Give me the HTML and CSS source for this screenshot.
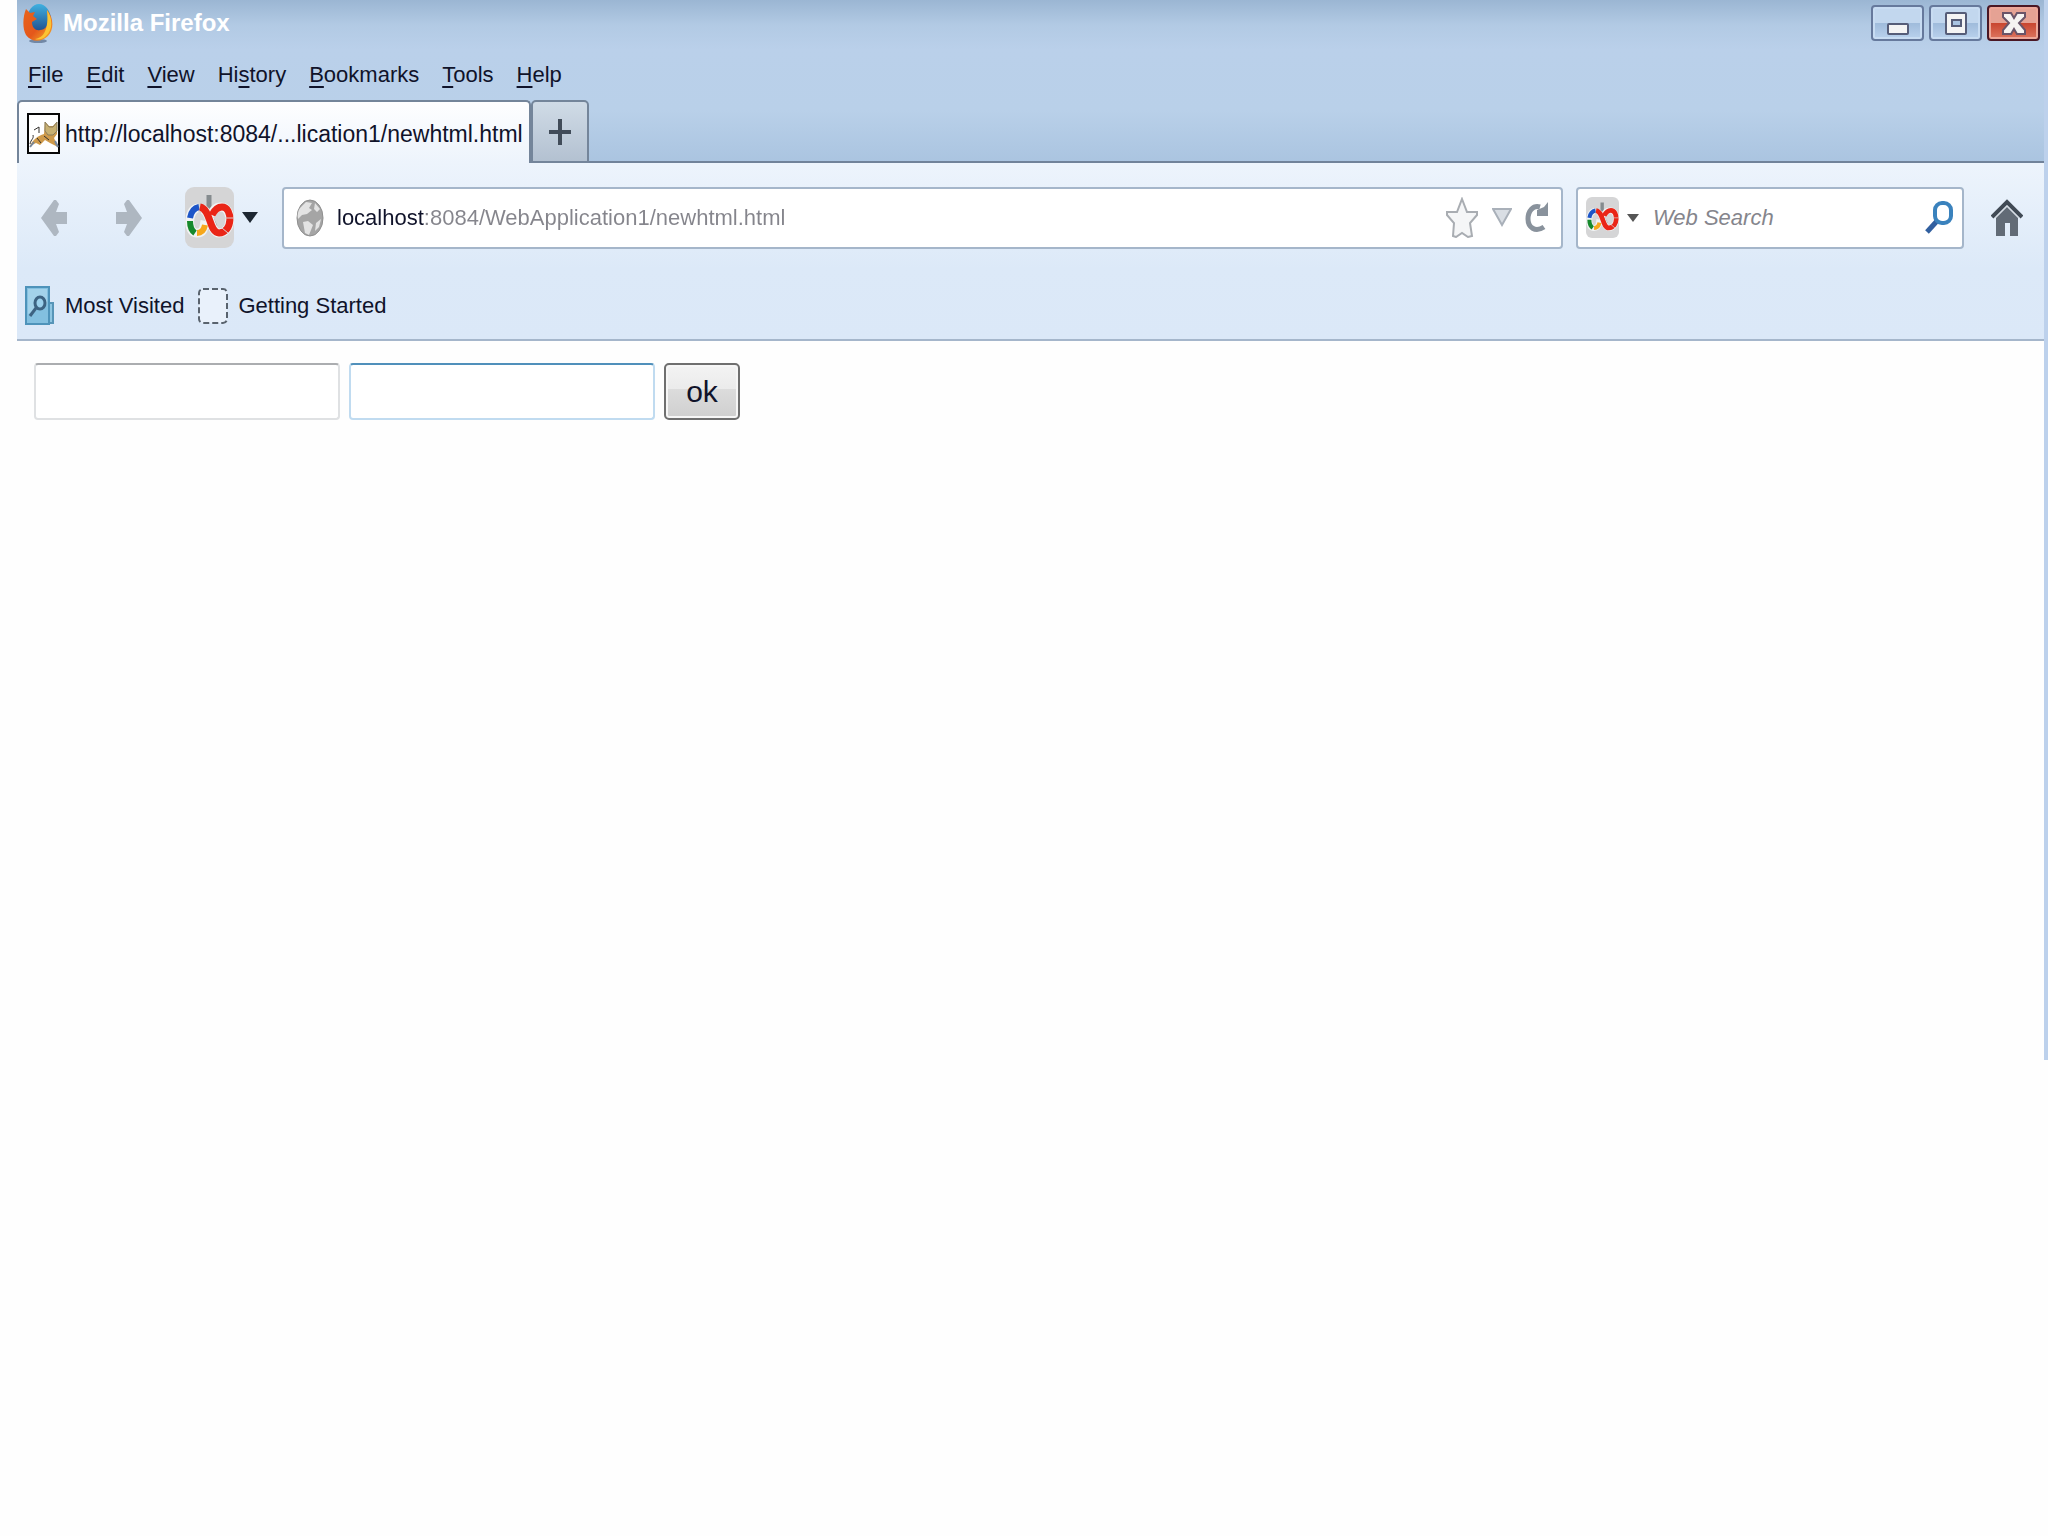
FILE: index.html
```html
<!DOCTYPE html>
<html lang="en">
<head>
    <meta charset="UTF-8">
    <meta name="viewport" content="width=device-width, initial-scale=1.0">
    <title>Mozilla Firefox</title>
    <link rel="stylesheet" href="styles.css">
</head>
<body>
    <!-- search engine logo, used in the toolbar and in the search box -->
    <svg class="defs" width="0" height="0" aria-hidden="true">
        <symbol id="engine" viewBox="0 0 49 61" preserveAspectRatio="none">
            <rect width="49" height="61" rx="9" fill="#d5d5d6"/>
            <path d="M24 8v18l6 14" fill="none" stroke="#858b8e" stroke-width="5"/>
            <g fill="none" stroke="#f1f3f4" stroke-width="9">
                <path d="M13 21C2 22 2 47 12 46c8 0 7-8 8-12M17 22c9 2 8 24 17 24 14 0 14-26 2-26-6 0-9 5-10 9"/>
            </g>
            <g fill="none" stroke-width="6">
                <path d="M14 20C9 21 6 25 5 31" stroke="#1d55c8"/>
                <path d="M5 34c0 6 2 10 5 12" stroke="#16892c"/>
                <path d="M12 46c4 0 7-3 8-8" stroke="#f6a71c"/>
                <path d="M15 20c11 2 9 26 19 26 14 0 14-26 3-26-5 0-8 4-10 8" stroke="#ea2517" stroke-width="7"/>
            </g>
            <path d="M40 31h8M37 41l6 5" stroke="#d5d5d6" stroke-width="1"/>
        </symbol>
    </svg>

    <div class="browser">
        <header class="top">
            <div class="titlebar">
                <svg class="logo" width="30" height="40" viewBox="0 0 30 40" aria-hidden="true">
                    <defs>
                        <linearGradient id="fox" x1="0" y1="0" x2="1" y2="1">
                            <stop offset="0" stop-color="#e8641b"/>
                            <stop offset=".55" stop-color="#e4571b"/>
                            <stop offset="1" stop-color="#f8b82c"/>
                        </linearGradient>
                        <linearGradient id="sky" x1="0" y1="0" x2="0" y2="1">
                            <stop offset="0" stop-color="#3fb0e0"/>
                            <stop offset="1" stop-color="#1b3f82"/>
                        </linearGradient>
                    </defs>
                    <ellipse cx="15" cy="38" rx="9" ry="2" fill="#7288a6"/>
                    <ellipse cx="16" cy="17" rx="12" ry="16" fill="url(#sky)"/>
                    <path d="M3 6l4 4 5-1-2 4 4 3-5 3c0 6 4 9 8 8 6 0 9-6 8-12l-1-8c7 8 7 20 1 26-7 7-17 6-22-1C-1 25 0 13 3 6z" fill="url(#fox)"/>
                    <path d="M24 7c6 8 6 20-1 26-4 4-8 4-11 3 9-1 14-10 12-29z" fill="#fbc433"/>
                </svg>
                <h1 class="title">Mozilla Firefox</h1>
                <div class="window-buttons">
                    <button class="win" type="button" aria-label="Minimize">
                        <svg width="24" height="25" viewBox="0 0 24 25"><rect x="2" y="13" width="20" height="10" rx="1" fill="#f4f4f4" stroke="#565d78" stroke-width="2"/></svg>
                    </button>
                    <button class="win" type="button" aria-label="Maximize">
                        <svg width="24" height="25" viewBox="0 0 24 25"><rect x="2" y="2" width="20" height="21" rx="1" fill="#f4f4f4" stroke="#565d78" stroke-width="2"/><rect x="8" y="9" width="9" height="6" fill="#a9c4e2" stroke="#565d78" stroke-width="2"/></svg>
                    </button>
                    <button class="win close" type="button" aria-label="Close">
                        <svg width="24" height="25" viewBox="0 0 24 25"><path d="M1 2h8l3 5 3-5h8v4l-6 6 6 7v4h-8l-3-5-3 5H1v-4l6-7-6-6z" fill="#f6f3f1" stroke="#6a5468" stroke-width="2"/></svg>
                    </button>
                </div>
            </div>

            <nav class="menubar">
                <button type="button"><u>F</u>ile</button>
                <button type="button"><u>E</u>dit</button>
                <button type="button"><u>V</u>iew</button>
                <button type="button">Hi<u>s</u>tory</button>
                <button type="button"><u>B</u>ookmarks</button>
                <button type="button"><u>T</u>ools</button>
                <button type="button"><u>H</u>elp</button>
            </nav>

            <div class="tabs">
                <button class="tab" type="button">
                    <svg width="33" height="41" viewBox="0 0 33 41" aria-hidden="true">
                        <rect x="1" y="1" width="31" height="39" fill="#fff" stroke="#080808" stroke-width="2"/>
                        <path d="M3 33c3-7 8-10 14-12l1-12 4 4h4l4-4v12l-3 4 4 9-8-4-5-3-5 5-4-2-4 2z" fill="#cf9a4a"/>
                        <path d="M18 9l4 5h4l4-5v9l-4 4h-5l-3-4z" fill="#c8b071" stroke="#8a7c5b"/>
                        <path d="M7 17l5-3M12 20v-6M3 31c1-5 4-5 3-9M10 25l4 5M17 23l5 4" fill="none" stroke="#33302d" stroke-width="1"/>
                        <path d="M3 34l4-5M28 28l3 6" stroke="#77879c" stroke-width="2"/>
                    </svg>
                    <span>http://localhost:8084/...lication1/newhtml.html</span>
                </button>
                <button class="new-tab" type="button" aria-label="Open a new tab">
                    <svg width="22" height="26" viewBox="0 0 22 26"><path d="M11 0v26M0 13h22" stroke="#414c59" stroke-width="4"/></svg>
                </button>
            </div>
        </header>

        <div class="toolbars">
            <div class="toolbar">
                <button class="icon-button" type="button" aria-label="Back">
                    <svg width="26" height="36" viewBox="0 0 26 36"><path d="M0 18L13 0h2l3 4-3 8h11v12H15l3 8-3 4h-2z" fill="#aeb7c1"/></svg>
                </button>
                <button class="icon-button forward" type="button" aria-label="Forward">
                    <svg width="26" height="36" viewBox="0 0 26 36"><path d="M26 18L13 0h-2L8 4l3 8H0v12h11l-3 8 3 4h2z" fill="#aeb7c1"/></svg>
                </button>
                <button class="icon-button engine" type="button" aria-label="Search toolbar">
                    <svg width="49" height="61"><use href="#engine"/></svg>
                    <svg width="16" height="11" viewBox="0 0 16 11"><path d="M0 0h16L8 11z" fill="#1d2631"/></svg>
                </button>

                <div class="field address">
                    <svg width="28" height="38" viewBox="0 0 28 38" aria-hidden="true">
                        <ellipse cx="14" cy="19" rx="13" ry="18" fill="#a5a5a5" stroke="#8f8f8f"/>
                        <path d="M4 9l6-6 6 1-3 5 3 2-5 4-5 1-4 4c-1-4 0-8 2-11zM19 4l5 6-3 3-3-3zM7 23l5-1 5 4-2 5-2 5-4-2zM20 24l5-4-2 8-4 4z" fill="#e3e3e3"/>
                    </svg>
                    <input class="url" type="text" aria-label="Address" value="localhost:8084/WebApplication1/newhtml.html">
                    <button class="icon-button" type="button" aria-label="Bookmark this page">
                        <svg width="33" height="41" viewBox="0 0 33 41"><path d="M16 2l5 13h10v3l-7 8 2 13-4 1-6-4-6 4-3-1 1-13-7-8v-3h10z" fill="#f5f6f7" stroke="#a9adb2" stroke-width="2"/></svg>
                    </button>
                    <button class="icon-button" type="button" aria-label="Show history">
                        <svg width="20" height="19" viewBox="0 0 20 19"><path d="M1 1h18l-9 16z" fill="#d9dee4" stroke="#a9b0b9" stroke-width="2"/></svg>
                    </button>
                    <button class="icon-button" type="button" aria-label="Reload">
                        <svg width="24" height="32" viewBox="0 0 24 32"><path d="M15 5C8 3 3 9 3 17s7 14 16 8" fill="none" stroke="#89929c" stroke-width="5"/><path d="M23 0v14H12V8l7-3z" fill="#89929c"/></svg>
                    </button>
                </div>

                <div class="field search">
                    <button class="icon-button" type="button" aria-label="Choose search engine">
                        <svg width="33" height="41"><use href="#engine"/></svg>
                        <svg width="12" height="8" viewBox="0 0 12 8"><path d="M0 0h12L6 8z" fill="#555"/></svg>
                    </button>
                    <input class="query" type="text" aria-label="Web Search" placeholder="Web Search">
                    <button class="icon-button" type="button" aria-label="Search">
                        <svg width="28" height="34" viewBox="0 0 28 34"><path d="M2 31l10-11" stroke="#315f9f" stroke-width="5"/><rect x="10" y="2" width="16" height="20" rx="7" fill="#fff" stroke="#3a82bd" stroke-width="4"/></svg>
                    </button>
                </div>

                <button class="icon-button home" type="button" aria-label="Home">
                    <svg width="32" height="37" viewBox="0 0 32 37"><path d="M5 19L16 8l11 11v18h-8V24h-5v13H5z" fill="#626b76"/><path d="M1 18L16 3l15 15" fill="none" stroke="#414a55" stroke-width="4"/><path d="M4 19L16 7l12 12" fill="none" stroke="#d8dde2" stroke-width="1"/></svg>
                </button>
            </div>

            <nav class="bookmarks">
                <a href="#">
                    <svg width="30" height="40" viewBox="0 0 30 40" aria-hidden="true">
                        <path d="M24 17h4v20h-9z" fill="#8fc6e2" stroke="#5795b8" stroke-width="2"/>
                        <rect x="1" y="1" width="23" height="37" fill="#83c0e0" stroke="#4e93ba" stroke-width="2"/>
                        <path d="M3 3h19v15L3 28z" fill="#a3d2ea"/>
                        <ellipse cx="15" cy="17" rx="5" ry="6" fill="#9bd0ec" stroke="#3d6382" stroke-width="3"/>
                        <path d="M11 22l-6 8" stroke="#3d6382" stroke-width="3"/>
                    </svg>
                    Most Visited
                </a>
                <a href="#">
                    <svg width="30" height="36" viewBox="0 0 30 36" aria-hidden="true"><rect x="1" y="1" width="28" height="34" rx="4" fill="#e9f1fb" stroke="#59636e" stroke-width="2" stroke-dasharray="6 3"/></svg>
                    Getting Started
                </a>
            </nav>
        </div>

        <main class="page">
            <form class="form">
                <input class="text" type="text" name="first" aria-label="First value">
                <input class="text active" type="text" name="second" aria-label="Second value">
                <button class="ok" type="submit">ok</button>
            </form>
        </main>
    </div>
</body>
</html>
```
FILE: styles.css
```css
* {
    box-sizing: border-box;
}
body {
    margin: 0;
    background-color: #fefefe;
    font-family: "Liberation Sans", Arial, sans-serif;
    font-size: 22px;
    line-height: 32px;
    color: #10132a;
}
button, input {
    font: inherit;
    color: inherit;
}
button {
    padding: 0;
    border: none;
    background: none;
}
svg {
    display: block;
    flex: none;
}
.defs {
    position: absolute;
}
.browser {
    min-height: 69vh;
    margin-left: 17px;
    border-right: 4px solid #bdd1ec;
}

/* title bar, menu and tabs */
.top {
    background: linear-gradient(#9bb6d3, #b2cae4 25px, #bad0ea 50px, #b9d0e9 110px, #aac4e0);
}
.titlebar {
    display: flex;
    align-items: center;
    gap: 10px;
    height: 50px;
    padding: 0 4px 4px 6px;
}
.title {
    flex: 1;
    margin: 0;
    font-size: 24px;
    color: #fff;
}
.window-buttons {
    display: flex;
    gap: 5px;
}
.win {
    display: flex;
    align-items: center;
    justify-content: center;
    width: 53px;
    height: 36px;
    border: 2px solid #66799c;
    border-radius: 4px;
    background: linear-gradient(#c2d7ee 50%, #9fbbdb 50%, #bad2ed);
    box-shadow: inset 0 0 0 2px #c8dcf2;
}
.close {
    border-color: #4a1724;
    background: linear-gradient(#e5a294 50%, #c8452f 50%, #dd7661);
    box-shadow: inset 0 0 0 2px #eda698;
}
.menubar {
    display: flex;
    gap: 23px;
    height: 50px;
    padding: 0 11px;
}
.menubar u {
    text-underline-offset: 4px;
}
.tabs {
    display: flex;
    height: 63px;
    box-shadow: inset 0 -2px #71839a;
}
.tab {
    display: flex;
    align-items: center;
    gap: 5px;
    padding: 2px 6px 0 8px;
    border: 2px solid #74859a;
    border-bottom: none;
    border-radius: 5px 5px 0 0;
    background: linear-gradient(#fefeff, #edf4fc);
    font-size: 23px;
}
.new-tab {
    display: flex;
    align-items: center;
    justify-content: center;
    width: 58px;
    border: 2px solid #74859a;
    border-radius: 5px 5px 0 0;
    background: linear-gradient(#d0dbe6, #b3c1d1);
}

/* navigation and bookmarks */
.toolbars {
    border-bottom: 2px solid #a5b6cb;
    background: linear-gradient(#edf4fc, #dce9f8 60%, #dbe8f8);
}
.toolbar {
    display: flex;
    align-items: center;
    height: 109px;
    padding: 0 21px 0 24px;
}
.icon-button {
    display: flex;
    align-items: center;
    gap: 8px;
}
.forward {
    margin-left: 49px;
}
.engine {
    margin: 0 24px 0 43px;
}
.field {
    display: flex;
    align-items: center;
    min-width: 0;
    height: 62px;
    border: 2px solid #a5b6ca;
    border-radius: 4px;
    background-color: #fff;
}
.field input {
    flex: 1;
    min-width: 0;
    padding: 0;
    border: none;
    outline: none;
}
.address {
    flex: 1;
    gap: 13px;
    padding: 0 12px;
}
/* the host is darker than the rest of the address */
.url {
    background: linear-gradient(90deg, #10132a 87px, #85858c 87px);
    background-clip: text;
    -webkit-background-clip: text;
    color: transparent;
}
.search {
    flex: 0 1 388px;
    gap: 14px;
    margin: 0 27px 0 13px;
    padding: 0 9px 0 8px;
}
.query::placeholder {
    color: #85858c;
    font-style: italic;
    opacity: 1;
}
.bookmarks {
    display: flex;
    gap: 14px;
    height: 67px;
    padding: 0 8px;
}
.bookmarks a {
    display: flex;
    align-items: center;
    gap: 10px;
    color: inherit;
    text-decoration: none;
}

/* page content */
.page {
    padding: 22px 17px;
}
.form {
    display: flex;
    gap: 9px;
}
.text {
    width: 306px;
    height: 57px;
    padding: 0 8px;
    border: 2px solid #dfe1e3;
    border-top-color: #abadb0;
    border-radius: 4px;
    background-color: #fff;
}
.active {
    border-color: #c0dbf0;
    border-top-color: #5090bb;
}
.ok {
    width: 76px;
    border: 2px solid #6f6f6f;
    border-radius: 5px;
    background: linear-gradient(#f3f3f3, #ebebeb 46%, #dcdcdc 46%, #cfcfcf);
    box-shadow: inset 0 0 0 2px #f6f6f6;
    font-size: 30px;
}
```
